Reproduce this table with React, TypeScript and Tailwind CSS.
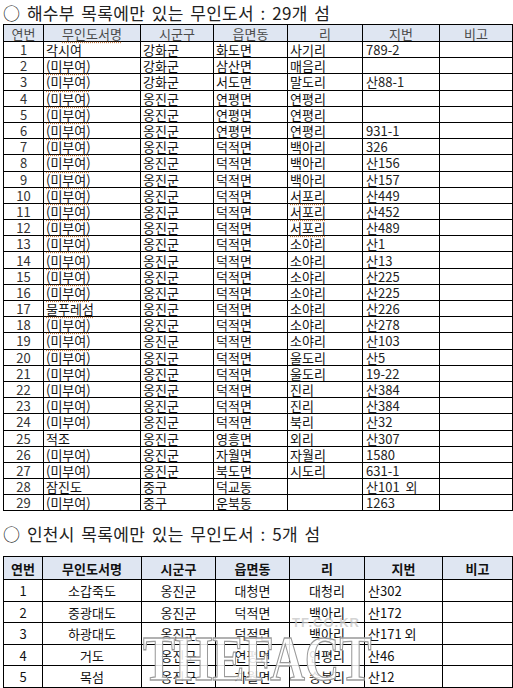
type Row = [string, string, string, string, string, string]

const haesu: Row[] = [
  ["1", "각시여", "강화군", "화도면", "사기리", "789-2"],
  ["2", "(미부여)", "강화군", "삼산면", "매음리", ""],
  ["3", "(미부여)", "강화군", "서도면", "말도리", "산88-1"],
  ["4", "(미부여)", "옹진군", "연평면", "연평리", ""],
  ["5", "(미부여)", "옹진군", "연평면", "연평리", ""],
  ["6", "(미부여)", "옹진군", "연평면", "연평리", "931-1"],
  ["7", "(미부여)", "옹진군", "덕적면", "백아리", "326"],
  ["8", "(미부여)", "옹진군", "덕적면", "백아리", "산156"],
  ["9", "(미부여)", "옹진군", "덕적면", "백아리", "산157"],
  ["10", "(미부여)", "옹진군", "덕적면", "서포리", "산449"],
  ["11", "(미부여)", "옹진군", "덕적면", "서포리", "산452"],
  ["12", "(미부여)", "옹진군", "덕적면", "서포리", "산489"],
  ["13", "(미부여)", "옹진군", "덕적면", "소야리", "산1"],
  ["14", "(미부여)", "옹진군", "덕적면", "소야리", "산13"],
  ["15", "(미부여)", "옹진군", "덕적면", "소야리", "산225"],
  ["16", "(미부여)", "옹진군", "덕적면", "소야리", "산225"],
  ["17", "물푸레섬", "옹진군", "덕적면", "소야리", "산226"],
  ["18", "(미부여)", "옹진군", "덕적면", "소야리", "산278"],
  ["19", "(미부여)", "옹진군", "덕적면", "소야리", "산103"],
  ["20", "(미부여)", "옹진군", "덕적면", "울도리", "산5"],
  ["21", "(미부여)", "옹진군", "덕적면", "울도리", "19-22"],
  ["22", "(미부여)", "옹진군", "덕적면", "진리", "산384"],
  ["23", "(미부여)", "옹진군", "덕적면", "진리", "산384"],
  ["24", "(미부여)", "옹진군", "덕적면", "북리", "산32"],
  ["25", "적조", "옹진군", "영흥면", "외리", "산307"],
  ["26", "(미부여)", "옹진군", "자월면", "자월리", "1580"],
  ["27", "(미부여)", "옹진군", "북도면", "시도리", "631-1"],
  ["28", "잠진도", "중구", "덕교동", "", "산101  외"],
  ["29", "(미부여)", "중구", "운북동", "", "1263"],
]

const incheon: Row[] = [
  ["1", "소갑죽도", "옹진군", "대청면", "대청리", "산302"],
  ["2", "중광대도", "옹진군", "덕적면", "백아리", "산172"],
  ["3", "하광대도", "옹진군", "덕적면", "백아리", "산171 외"],
  ["4", "거도", "옹진군", "연평면", "연평리", "산46"],
  ["5", "목섬", "옹진군", "자월면", "승봉리", "산12"],
]

const heads = ["연번", "무인도서명", "시군구", "읍면동", "리", "지번", "비고"]

const squiggle = "underline decoration-dotted decoration-[#c9824a] underline-offset-[3px]"

function FirstTable() {
  const widths = ["w-[40px]", "w-[97px]", "w-[73px]", "w-[74px]", "w-[75px]", "w-[77px]", "w-[73px]"]
  return (
    <table className="w-[509px] table-fixed border-collapse text-[13px] leading-none">
      <colgroup>
        {widths.map((w, i) => (
          <col key={i} className={w} />
        ))}
      </colgroup>
      <thead>
        <tr className="h-[17px] bg-[#dfe6f2]">
          {heads.map((h, i) => (
            <th key={h} className="border border-black p-0 text-center font-normal text-[#4a4a4a]">
              <span className={i === 1 ? squiggle : ""}>{h}</span>
            </th>
          ))}
        </tr>
      </thead>
      <tbody>
        {haesu.map((r, idx) => {
          const n = idx + 1
          const nameMark = (n >= 2 && n <= 19) 
          return (
            <tr key={r[0]} className="h-[16.2px]">
              <td className="border border-black p-0 text-center text-[#333]">{r[0]}</td>
              <td className="border border-black p-0 pl-[2px]">
                <span className={nameMark ? squiggle : ""}>{r[1]}</span>
              </td>
              <td className="border border-black p-0 pl-[2px]">{r[2]}</td>
              <td className="border border-black p-0 pl-[2px]">{r[3]}</td>
              <td className="border border-black p-0 pl-[2px]">
                <span className={r[4] === "서포리" ? squiggle : ""}>{r[4]}</span>
              </td>
              <td className="border border-black p-0 pl-[3px] whitespace-pre text-[#222]">{r[5]}</td>
              <td className="border border-black p-0"></td>
            </tr>
          )
        })}
      </tbody>
    </table>
  )
}

function SecondTable() {
  const widths = ["w-[39px]", "w-[99px]", "w-[74px]", "w-[74px]", "w-[75px]", "w-[78px]", "w-[70px]"]
  return (
    <table className="w-[509px] table-fixed border-collapse text-[13px] leading-none">
      <colgroup>
        {widths.map((w, i) => (
          <col key={i} className={w} />
        ))}
      </colgroup>
      <thead>
        <tr className="h-[23px] bg-[#dfe6f2]">
          {heads.map((h) => (
            <th key={h} className="border border-black p-0 text-center font-bold text-[#111]">
              {h}
            </th>
          ))}
        </tr>
      </thead>
      <tbody>
        {incheon.map((r) => (
          <tr key={r[0]} className="h-[21.5px]">
            <td className="border border-black p-0 text-center">{r[0]}</td>
            <td className="border border-black p-0 text-center">{r[1]}</td>
            <td className="border border-black p-0 text-center">{r[2]}</td>
            <td className="border border-black p-0 text-center">{r[3]}</td>
            <td className="border border-black p-0 text-center">{r[4]}</td>
            <td className="border border-black p-0 pl-[3px]">{r[5]}</td>
            <td className="border border-black p-0"></td>
          </tr>
        ))}
      </tbody>
    </table>
  )
}

export default function App() {
  return (
    <div
      className="relative min-h-[688px] w-[513px] overflow-hidden bg-white px-[3px] text-[#111]"
      style={{ fontFamily: '"Noto Sans CJK KR", "Noto Sans", sans-serif' }}
    >
      {/* 해수부 */}
      <div className="flex h-[24px] items-center text-[17px] leading-none tracking-[0.3px] text-[#222] [word-spacing:2.5px]">
        ○ 해수부 목록에만 있는 무인도서 : 29개 섬
      </div>
      <FirstTable />

      {/* 인천시 */}
      <div className="flex h-[45px] items-center text-[17px] leading-none tracking-[0.3px] text-[#222] [word-spacing:2.5px]">
        ○ 인천시 목록에만 있는 무인도서 : 5개 섬
      </div>
      <SecondTable />

      {/* watermark */}
      <div className="pointer-events-none absolute left-[292px] top-[613px] text-[13px] font-bold tracking-[1px] text-[#c8c8c8]/80" style={{ fontFamily: '"Liberation Sans", sans-serif' }}>
        TF.CO.KR
      </div>
      <div
        className="pointer-events-none absolute left-[143px] top-[628px] origin-top scale-y-[1.3] text-[48px] font-bold leading-none text-white/85 [-webkit-text-stroke:1px_#9a9a9a]"
        style={{ fontFamily: '"Liberation Serif", serif' }}
      >
        THEFACT
      </div>
    </div>
  )
}
